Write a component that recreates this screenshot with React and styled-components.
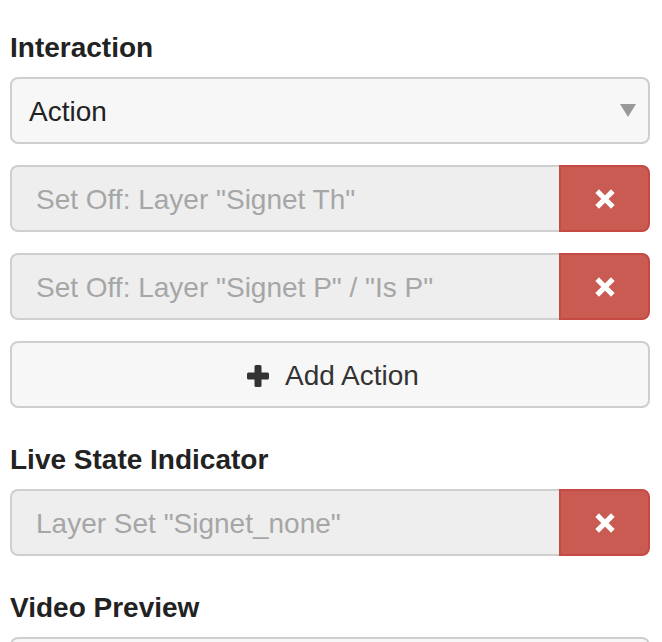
import React from 'react';
import styled, { createGlobalStyle } from 'styled-components';

const GlobalStyle = createGlobalStyle`
  html, body {
    margin: 0;
    padding: 0;
    background: #fff;
    overflow: hidden;
  }
  body {
    font-family: "Liberation Sans", Arial, Helvetica, sans-serif;
    color: #222;
  }
`;

const Panel = styled.div`
  padding: 28px 12px 0 10px;
  width: 640px;
`;

const Section = styled.div`
  margin-bottom: 32px;
`;

const Label = styled.div`
  font-size: 28px;
  font-weight: bold;
  line-height: 40px;
  color: #222;
  margin-bottom: 9px;
`;

const SelectBox = styled.div`
  position: relative;
  box-sizing: border-box;
  height: 67px;
  border: 2px solid #cfcfcf;
  border-radius: 8px;
  background: #f7f7f7;
  display: flex;
  align-items: center;
  padding: 2px 17px 0;
  font-size: 28px;
  color: #222;
`;

const Arrow = styled.span`
  position: absolute;
  right: 12px;
  top: 50%;
  margin-top: -7px;
  width: 0;
  height: 0;
  border-left: 8px solid transparent;
  border-right: 8px solid transparent;
  border-top: 13px solid #999;
`;

const Stack = styled.div`
  display: flex;
  flex-direction: column;
  gap: 21px;
`;

const InputGroup = styled.div`
  display: flex;
  height: 67px;
`;

const Field = styled.div`
  flex: 1;
  box-sizing: border-box;
  border: 2px solid #cfcfcf;
  border-right: none;
  border-radius: 8px 0 0 8px;
  background: #eee;
  display: flex;
  align-items: center;
  padding: 3px 24px 0;
  font-size: 28px;
  color: #a6a6a6;
  white-space: nowrap;
  overflow: hidden;
`;

const RemoveButton = styled.button`
  width: 91px;
  box-sizing: border-box;
  border: 2px solid #c54a43;
  border-radius: 0 8px 8px 0;
  background: #ca5b53;
  display: flex;
  align-items: center;
  justify-content: center;
  padding: 0;
  cursor: pointer;
`;

const AddButton = styled.button`
  height: 67px;
  box-sizing: border-box;
  border: 2px solid #cfcfcf;
  border-radius: 8px;
  background: #f7f7f7;
  display: flex;
  align-items: center;
  justify-content: center;
  gap: 16px;
  font-family: inherit;
  font-size: 28px;
  color: #333;
  padding: 2px 0 0 6px;
  cursor: pointer;
`;

const RemoveIcon = () => (
  <svg width="20" height="20" viewBox="0 0 20 20">
    <path d="M4 4 L16 16 M16 4 L4 16" stroke="#fff" strokeWidth="5.2" strokeLinecap="square" />
  </svg>
);

const PlusIcon = () => (
  <svg width="22" height="22" viewBox="0 0 22 22">
    <rect x="7.5" y="0" width="7" height="22" rx="1.5" fill="#333" />
    <rect x="0" y="7.5" width="22" height="7" rx="1.5" fill="#333" />
  </svg>
);

const ActionRow = ({ text }) => (
  <InputGroup>
    <Field>{text}</Field>
    <RemoveButton>
      <RemoveIcon />
    </RemoveButton>
  </InputGroup>
);

export default function App() {
  return (
    <>
      <GlobalStyle />
      <Panel>
        <Section>
          <Label>Interaction</Label>
          <Stack>
            <SelectBox>
              Action
              <Arrow />
            </SelectBox>
            <ActionRow text={'Set Off: Layer "Signet Th"'} />
            <ActionRow text={'Set Off: Layer "Signet P" / "Is P"'} />
            <AddButton>
              <PlusIcon />
              Add Action
            </AddButton>
          </Stack>
        </Section>
        <Section>
          <Label>Live State Indicator</Label>
          <ActionRow text={'Layer Set "Signet_none"'} />
        </Section>
        <Section>
          <Label>Video Preview</Label>
          <SelectBox />
        </Section>
      </Panel>
    </>
  );
}
